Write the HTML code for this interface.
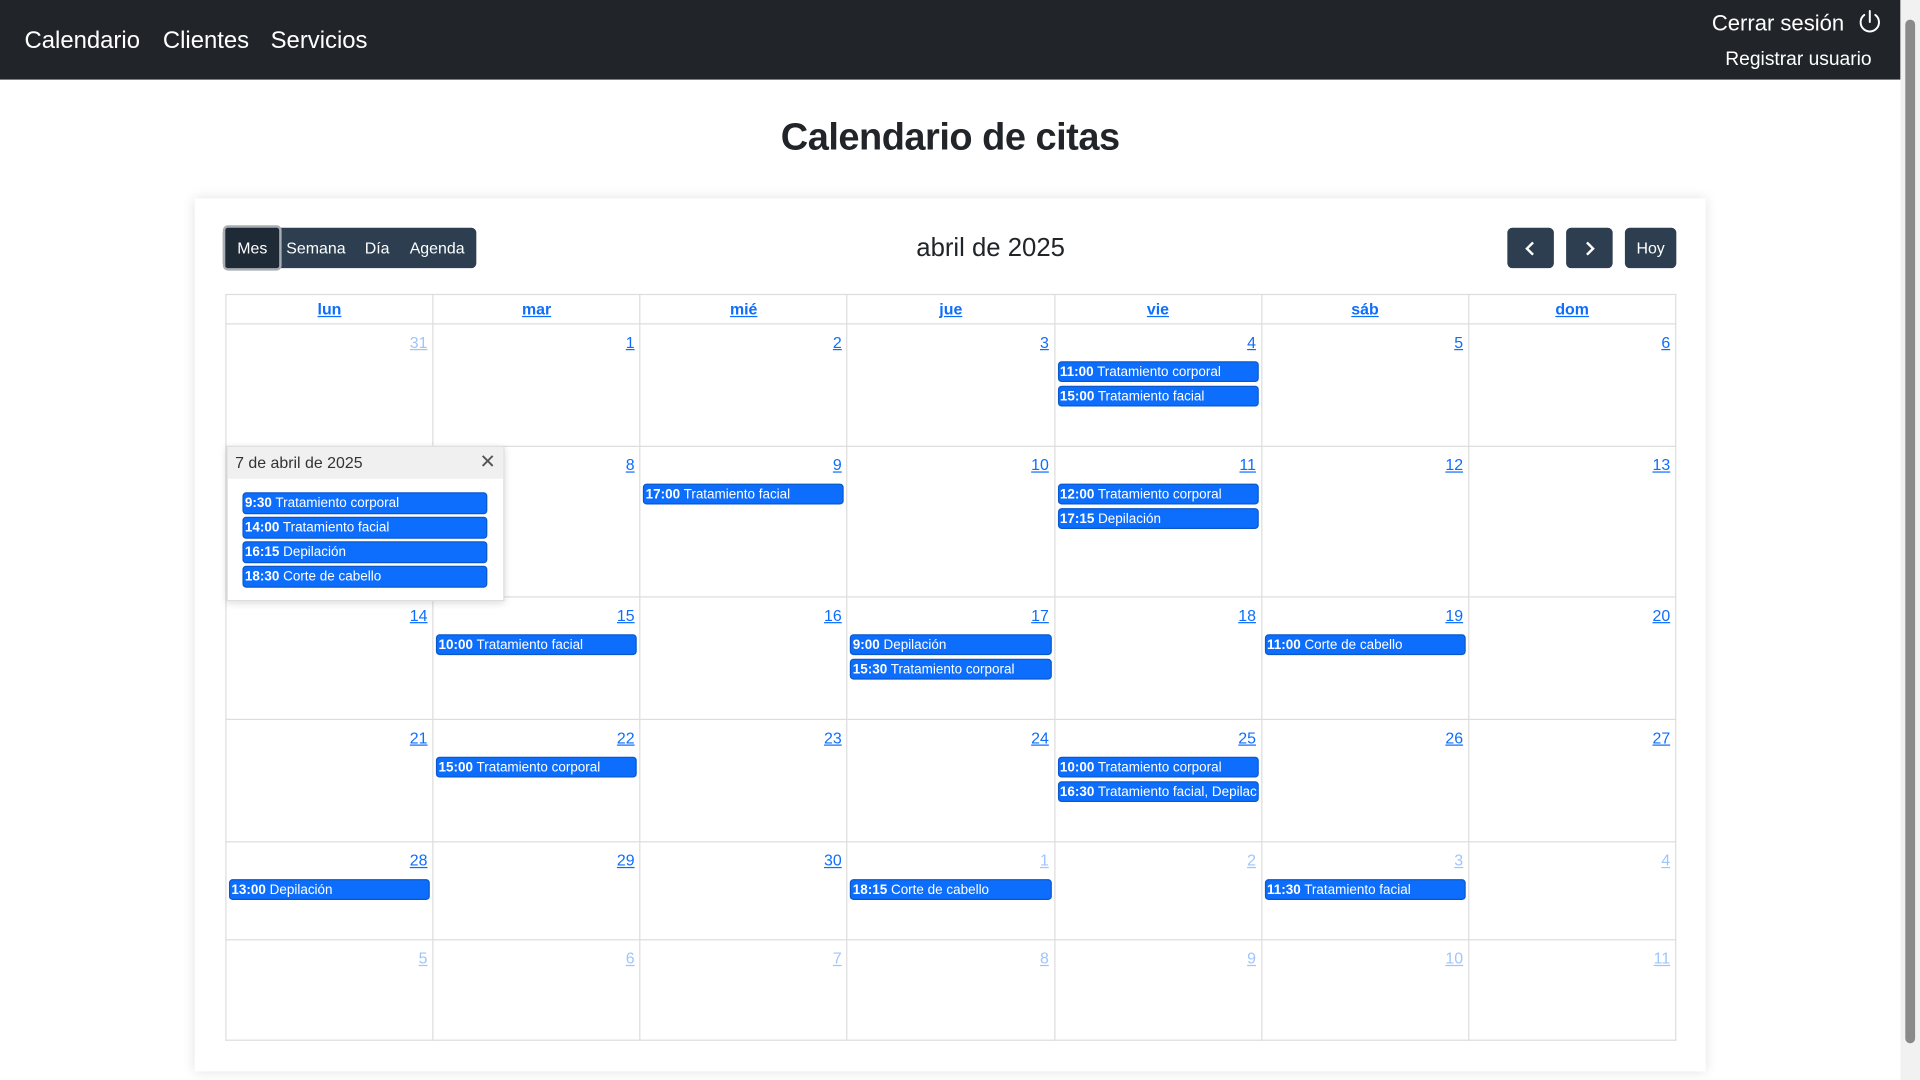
<!DOCTYPE html>
<html><head><meta charset="utf-8">
<style>
html,body{margin:0;padding:0;width:1920px;height:1080px;overflow:hidden;background:#fff;font-family:"Liberation Sans",sans-serif;}
#w{position:absolute;left:0;top:0;width:1568px;height:882px;transform:scale(1.22449);transform-origin:0 0;}
.nav{position:absolute;left:0;top:0;width:1552px;height:65px;background:#212529;color:#fff;}
.nav .l{position:absolute;top:22px;font-size:19.5px;}
.sb{position:absolute;left:1552px;top:0;width:16px;height:882px;background:#f1f1f1;}
.sb .th{position:absolute;left:4px;top:16px;width:8px;height:836px;background:#8a8a8a;border-radius:4px;}
h1{position:absolute;left:0;width:1552px;top:94px;margin:0;text-align:center;font-size:31px;font-weight:bold;color:#212529;letter-spacing:-0.4px;}
.card{position:absolute;left:159px;top:162px;width:1234px;height:713px;background:#fff;box-shadow:0 0 10px rgba(0,0,0,.12);}
.btn{position:absolute;top:186px;height:33px;background:#2c3e50;color:#fff;font-size:13px;line-height:33px;text-align:center;border-radius:4px;}
table{position:absolute;left:184px;top:240px;border-collapse:collapse;table-layout:fixed;width:1185px;}
td,th{border:1px solid #ddd;padding:0;vertical-align:top;}
th{height:22px;font-size:13px;font-weight:bold;line-height:22px;padding-top:1px;}
th a,.d a{color:#0d6efd;text-decoration:underline;}
.d{text-align:right;padding:7px 4px 0 0;font-size:13px;line-height:15px;height:15px;margin-bottom:8px;}
.d.o a{color:#9ec5fe;}
.e{background:#0d6efd;color:#fff;font-size:11px;height:17px;line-height:16px;margin:0 2px 3px 2px;border-radius:3px;padding-left:1px;white-space:nowrap;overflow:hidden;border:1px solid #0a58ca;box-sizing:border-box;}
.e b{font-weight:bold;}
.pop{position:absolute;left:185px;top:364px;width:225px;height:125px;background:#fff;border:1px solid #ddd;box-shadow:0 2px 6px rgba(0,0,0,.15);}
.pop .h{background:#f0f0f0;height:26px;line-height:26px;padding-left:6px;font-size:13px;color:#333;}
.pop .e{margin:0 0 2px 0;width:200px;height:18px;line-height:17px;}
</style></head><body><div id="w">
<div class="nav">
<span class="l" style="left:20px">Calendario</span><span class="l" style="left:133px">Clientes</span><span class="l" style="left:221px">Servicios</span>
<span style="position:absolute;left:1398px;top:9px;font-size:18px;">Cerrar sesión</span>
<svg style="position:absolute;left:1516px;top:7px" width="22" height="22" viewBox="0 0 22 22" fill="none" stroke="#fff" stroke-width="1.6" stroke-linecap="round"><path d="M11 2v9"/><path d="M6.5 5.2A7.5 7.5 0 1 0 15.5 5.2"/></svg>
<span style="position:absolute;left:1409px;top:40px;font-size:15.7px;">Registrar usuario</span>
</div>
<div class="sb"><div class="th"></div></div>
<h1>Calendario de citas</h1>
<div class="card"></div>
<div class="btn" style="left:182px;width:207px;background:#2c3e50"></div>
<div class="btn" style="left:182px;width:44px;background:#1e2b37;border:2px solid #a8aeb4;top:184px;height:33px;line-height:33px;border-radius:4px;">Mes</div>
<div class="btn" style="left:229px;width:58px;background:none">Semana</div>
<div class="btn" style="left:292px;width:32px;background:none">Día</div>
<div class="btn" style="left:330px;width:54px;background:none">Agenda</div>
<div style="position:absolute;left:600px;width:418px;top:191px;text-align:center;font-size:21px;color:#212529;">abril de 2025</div>
<div class="btn" style="left:1231px;width:38px;"><svg width="14" height="14" viewBox="0 0 14 14" style="margin-top:10px" fill="none" stroke="#fff" stroke-width="2"><path d="M9 2L4 7l5 5"/></svg></div>
<div class="btn" style="left:1279px;width:38px;"><svg width="14" height="14" viewBox="0 0 14 14" style="margin-top:10px" fill="none" stroke="#fff" stroke-width="2"><path d="M5 2l5 5-5 5"/></svg></div>
<div class="btn" style="left:1327px;width:42px;">Hoy</div>
<table>
<colgroup><col style="width:169px"><col style="width:169px"><col style="width:169px"><col style="width:169px"><col style="width:169px"><col style="width:169px"><col style="width:169px"></colgroup>
<tr><th><a>lun</a></th><th><a>mar</a></th><th><a>mié</a></th><th><a>jue</a></th><th><a>vie</a></th><th><a>sáb</a></th><th><a>dom</a></th></tr>
<tr style="height:100px"><td><div class="d o"><a>31</a></div></td><td><div class="d"><a>1</a></div></td><td><div class="d"><a>2</a></div></td><td><div class="d"><a>3</a></div></td><td><div class="d"><a>4</a></div><div class="e"><b>11:00</b> Tratamiento corporal</div><div class="e"><b>15:00</b> Tratamiento facial</div></td><td><div class="d"><a>5</a></div></td><td><div class="d"><a>6</a></div></td></tr>
<tr style="height:123px"><td><div class="d"><a>7</a></div></td><td><div class="d"><a>8</a></div></td><td><div class="d"><a>9</a></div><div class="e"><b>17:00</b> Tratamiento facial</div></td><td><div class="d"><a>10</a></div></td><td><div class="d"><a>11</a></div><div class="e"><b>12:00</b> Tratamiento corporal</div><div class="e"><b>17:15</b> Depilación</div></td><td><div class="d"><a>12</a></div></td><td><div class="d"><a>13</a></div></td></tr>
<tr style="height:100px"><td><div class="d"><a>14</a></div></td><td><div class="d"><a>15</a></div><div class="e"><b>10:00</b> Tratamiento facial</div></td><td><div class="d"><a>16</a></div></td><td><div class="d"><a>17</a></div><div class="e"><b>9:00</b> Depilación</div><div class="e"><b>15:30</b> Tratamiento corporal</div></td><td><div class="d"><a>18</a></div></td><td><div class="d"><a>19</a></div><div class="e"><b>11:00</b> Corte de cabello</div></td><td><div class="d"><a>20</a></div></td></tr>
<tr style="height:100px"><td><div class="d"><a>21</a></div></td><td><div class="d"><a>22</a></div><div class="e"><b>15:00</b> Tratamiento corporal</div></td><td><div class="d"><a>23</a></div></td><td><div class="d"><a>24</a></div></td><td><div class="d"><a>25</a></div><div class="e"><b>10:00</b> Tratamiento corporal</div><div class="e"><b>16:30</b> Tratamiento facial, Depilación</div></td><td><div class="d"><a>26</a></div></td><td><div class="d"><a>27</a></div></td></tr>
<tr style="height:80px"><td><div class="d"><a>28</a></div><div class="e"><b>13:00</b> Depilación</div></td><td><div class="d"><a>29</a></div></td><td><div class="d"><a>30</a></div></td><td><div class="d o"><a>1</a></div><div class="e"><b>18:15</b> Corte de cabello</div></td><td><div class="d o"><a>2</a></div></td><td><div class="d o"><a>3</a></div><div class="e"><b>11:30</b> Tratamiento facial</div></td><td><div class="d o"><a>4</a></div></td></tr>
<tr style="height:82px"><td><div class="d o"><a>5</a></div></td><td><div class="d o"><a>6</a></div></td><td><div class="d o"><a>7</a></div></td><td><div class="d o"><a>8</a></div></td><td><div class="d o"><a>9</a></div></td><td><div class="d o"><a>10</a></div></td><td><div class="d o"><a>11</a></div></td></tr>
</table>
<div class="pop"><div class="h">7 de abril de 2025<span style="position:absolute;right:6px;top:0;font-size:16px;color:#555">✕</span></div>
<div style="padding:11px 0 0 12px">
<div class="e"><b>9:30</b> Tratamiento corporal</div><div class="e"><b>14:00</b> Tratamiento facial</div><div class="e"><b>16:15</b> Depilación</div><div class="e"><b>18:30</b> Corte de cabello</div>
</div></div>
</div></body></html>
